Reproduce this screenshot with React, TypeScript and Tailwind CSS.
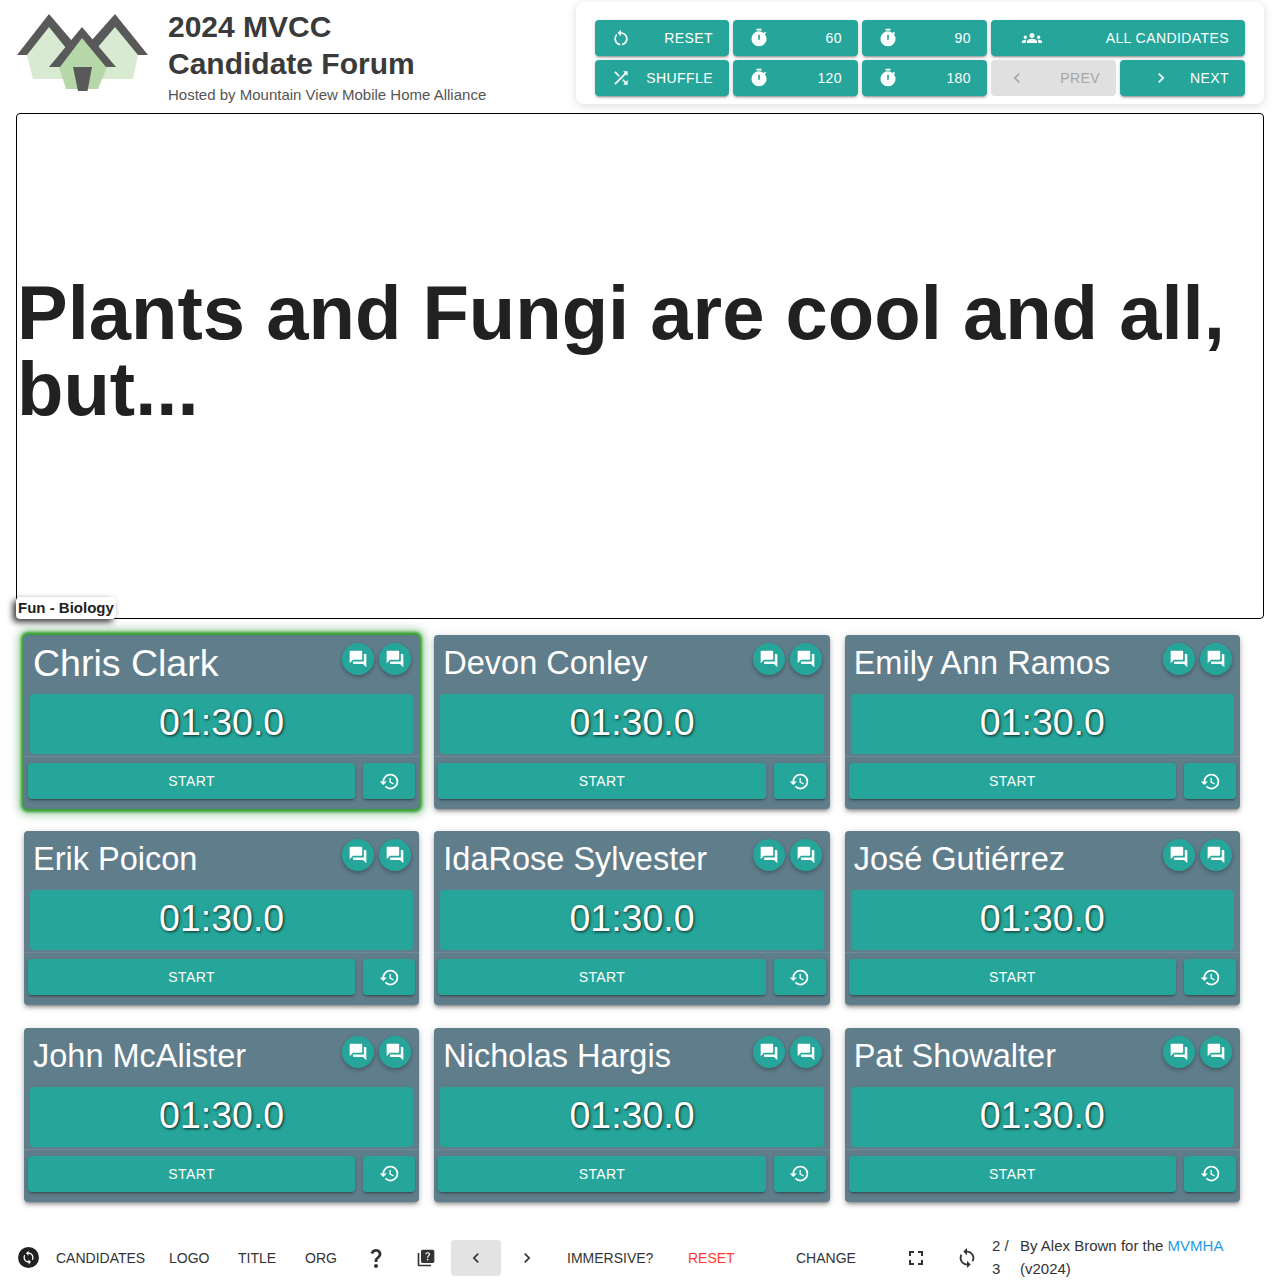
import React from 'react';
import {
  MdChevronLeft,
  MdChevronRight,
  MdForum,
  MdFullscreen,
  MdGroups,
  MdHistory,
  MdQuestionMark,
  MdQuiz,
  MdRestartAlt,
  MdShuffle,
  MdSync,
  MdTimer
} from 'react-icons/md';

const candidates = [
  { name: 'Chris Clark', nameClass: 'text-[37.5px]', active: true },
  { name: 'Devon Conley', nameClass: 'text-[32.5px]' },
  { name: 'Emily Ann Ramos', nameClass: 'text-[32.5px]' },
  { name: 'Erik Poicon', nameClass: 'text-[32.5px]' },
  { name: 'IdaRose Sylvester', nameClass: 'text-[32.5px]' },
  { name: 'José Gutiérrez', nameClass: 'text-[32.5px]' },
  { name: 'John McAlister', nameClass: 'text-[32.5px]' },
  { name: 'Nicholas Hargis', nameClass: 'text-[32.5px]' },
  { name: 'Pat Showalter', nameClass: 'text-[32.5px]' }
];

const raised =
  'shadow-[0_3px_1px_-2px_rgba(0,0,0,0.2),0_2px_2px_0_rgba(0,0,0,0.14),0_1px_5px_0_rgba(0,0,0,0.12)]';

function PanelButton({
  icon,
  label,
  width,
  shift,
  disabled
}: {
  icon: React.ReactNode;
  label: string;
  width: string;
  shift?: boolean;
  disabled?: boolean;
}) {
  return (
    <button
      className={`flex h-9 items-center justify-between rounded px-4 text-sm tracking-[0.03em] ${width} ${
        disabled ? 'bg-[#e0e0e0] text-[#a6a6a6]' : `bg-[#26a69a] text-white ${raised}`
      }`}
    >
      <span className={shift ? 'ml-[15px]' : ''}>{icon}</span>
      <span>{label}</span>
    </button>
  );
}

function Logo() {
  return (
    <svg width="134" height="80" viewBox="0 0 134 80" className="shrink-0">
      <polygon points="33,13 11,43 17,67 117,67 122,43 99,13 66,48" fill="#d9ead3" />
      <polygon points="66,25 91,55 82,77 50,77 43,55" fill="#b6d7a8" />
      <polygon points="57,55 76,55 71.5,79 62,79" fill="#595959" />
      <polygon points="33,2 56,29 50,36 33,15 11,43 1,43" fill="#595959" />
      <polygon points="99,2 132,43 122,43 99,15 82,35 76,28" fill="#595959" />
      <polygon points="66,15 100,55 90,55 66,26 44,55 33,55" fill="#595959" />
    </svg>
  );
}

function CandidateCard({ name, nameClass, active }: { name: string; nameClass: string; active?: boolean }) {
  return (
    <div
      className={`flex h-[174px] flex-col rounded-sm bg-[#607d8b] ${
        active
          ? 'shadow-[0_0_3px_3px_#339e30,0_0_8px_6px_rgba(67,160,71,0.45)]'
          : 'shadow-[0_3px_3px_-2px_rgba(0,0,0,0.3),0_3px_4px_0_rgba(0,0,0,0.2),0_1px_8px_0_rgba(0,0,0,0.14)]'
      }`}
    >
      <div className="flex h-[59px] items-start justify-between pl-[9px] pr-2">
        <div className={`h-[59px] leading-[57.4px] text-white ${nameClass}`}>{name}</div>
        <div className="flex gap-[5px] pt-2">
          {[0, 1].map((i) => (
            <button
              key={i}
              className="flex h-8 w-8 items-center justify-center rounded-full bg-[#26a69a] text-white shadow-[0_2px_4px_rgba(0,0,0,0.3)]"
            >
              <MdForum size={20} />
            </button>
          ))}
        </div>
      </div>
      <div className="mx-1.5 flex h-[60px] items-center justify-center rounded bg-[#26a69a] pb-1 text-[37.5px] text-white [text-shadow:1px_1px_3px_rgba(0,0,0,0.8)]">
        01:30.0
      </div>
      <div className="mt-0.5 border-t border-[#6f8a96]" />
      <div className="flex gap-2 px-1 pt-1.5">
        <button className={`h-9 flex-1 rounded-sm bg-[#26a69a] text-sm tracking-[0.03em] text-white ${raised}`}>
          START
        </button>
        <button
          className={`flex h-9 w-[52px] items-center justify-center rounded-sm bg-[#26a69a] text-white ${raised}`}
        >
          <MdHistory size={21} />
        </button>
      </div>
    </div>
  );
}

export default function App() {
  return (
    <div className="h-[1280px] overflow-hidden bg-white font-['Liberation_Sans',sans-serif] text-[#212121]">
      <header className="flex h-[113px] justify-between pl-4 pr-4">
        <div className="flex gap-[18px]">
          <div className="pt-3">
            <Logo />
          </div>
          <div className="pt-2">
            <h1 className="text-[30px] font-bold leading-[37px] text-[#3a3a3a]">
              2024 MVCC
              <br />
              Candidate Forum
            </h1>
            <p className="mt-[3px] text-[15px] leading-5 text-[#555555]">Hosted by Mountain View Mobile Home Alliance</p>
          </div>
        </div>
        <div className="mt-0.5 flex h-[102px] w-[688px] flex-col gap-1 rounded-lg bg-white pl-[19px] pt-[18px] shadow-[0_2px_10px_rgba(0,0,0,0.14)]">
          <div className="flex gap-1">
            <PanelButton icon={<MdRestartAlt size={20} />} label="RESET" width="w-[134px]" />
            <PanelButton icon={<MdTimer size={20} />} label="60" width="w-[125px]" />
            <PanelButton icon={<MdTimer size={20} />} label="90" width="w-[125px]" />
            <PanelButton icon={<MdGroups size={20} />} label="ALL CANDIDATES" width="w-[254px]" shift />
          </div>
          <div className="flex gap-1">
            <PanelButton icon={<MdShuffle size={20} />} label="SHUFFLE" width="w-[134px]" />
            <PanelButton icon={<MdTimer size={20} />} label="120" width="w-[125px]" />
            <PanelButton icon={<MdTimer size={20} />} label="180" width="w-[125px]" />
            <PanelButton icon={<MdChevronLeft size={20} />} label="PREV" width="w-[125px]" disabled />
            <PanelButton icon={<MdChevronRight size={20} />} label="NEXT" width="w-[125px]" shift />
          </div>
        </div>
      </header>

      <section className="relative mx-4 flex h-[506px] items-center rounded border border-black pb-[30px]">
        <h2 className="text-[76px] font-bold leading-[76px]">Plants and Fungi are cool and all, but...</h2>
        <div className="absolute -bottom-px -left-px rounded bg-white px-0.5 text-[15px] font-bold leading-[22px] shadow-[-3px_3px_6px_rgba(0,0,0,0.8)]">
          Fun - Biology
        </div>
      </section>

      <section className="mx-6 mt-4 grid w-[1216px] grid-cols-3 gap-x-[15px] gap-y-[22.4px]">
        {candidates.map((c) => (
          <CandidateCard key={c.name} name={c.name} nameClass={c.nameClass} active={c.active} />
        ))}
      </section>

      <footer className="mt-[38px] flex h-9 items-center pl-4 text-sm text-[#333333]">
        <span className="flex w-6 justify-center">
          <span className="flex h-[21px] w-[21px] items-center justify-center rounded-full bg-[#212121] text-white">
            <MdSync size={15} />
          </span>
        </span>
        <span className="ml-4 w-[89px]">CANDIDATES</span>
        <span className="ml-6 w-[41px]">LOGO</span>
        <span className="ml-7 w-[38px]">TITLE</span>
        <span className="ml-[29px] w-8">ORG</span>
        <span className="ml-[27px] flex w-6 justify-center">
          <MdQuestionMark size={24} />
        </span>
        <span className="ml-[26px] flex w-6 justify-center">
          <MdQuiz size={20} />
        </span>
        <span className="ml-[13px] flex h-9 w-[50px] items-center justify-center rounded-sm bg-[#e3e3e3]">
          <MdChevronLeft size={20} />
        </span>
        <span className="ml-4 flex w-5 justify-center">
          <MdChevronRight size={20} />
        </span>
        <span className="ml-[30px] w-[86px]">IMMERSIVE?</span>
        <span className="ml-[35px] w-[47px] text-[#ff3b30]">RESET</span>
        <span className="ml-[61px] w-[60px]">CHANGE</span>
        <span className="ml-[48px] flex w-6 justify-center">
          <MdFullscreen size={24} />
        </span>
        <span className="ml-[27px] flex w-6 justify-center">
          <MdSync size={22} />
        </span>
        <div className="ml-[13px] flex w-[260px] gap-[11px] pb-0.5 text-[15px] leading-[23px]">
          <div className="w-[17px] shrink-0">2 / 3</div>
          <div className="w-[220px]">
            By Alex Brown for the <span className="text-[#1e9be8]">MVMHA</span> (v2024)
          </div>
        </div>
      </footer>
    </div>
  );
}
